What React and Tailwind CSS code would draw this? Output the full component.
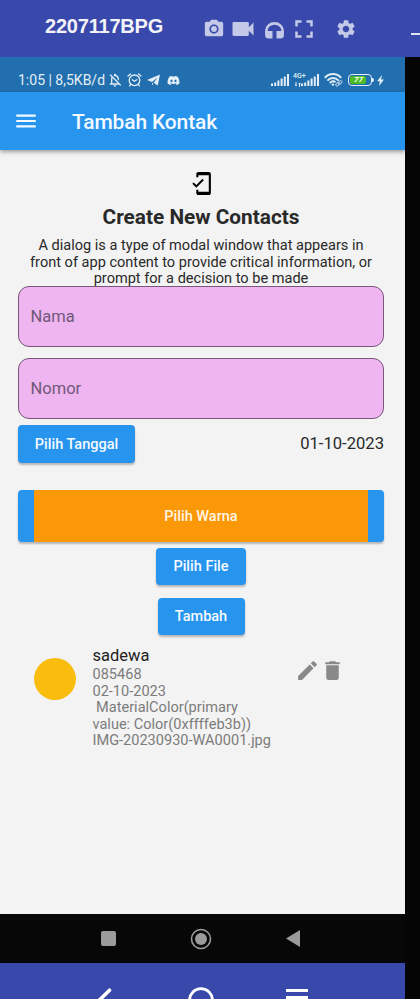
import React from "react";
import {
  MdPhotoCamera, MdVideocam, MdFullscreen, MdSettings, MdMenu,
  MdMobileFriendly, MdEdit, MdDelete, MdOutlineNotificationsOff,
} from "react-icons/md";
import { FaDiscord } from "react-icons/fa";

function Headphones() {
  return (
    <svg viewBox="0 0 19 17" className="mt-[2px] ml-[8px] h-[17px] w-[19px] shrink-0" fill="none">
      <path d="M1.400 11V8.500a8.100 7.100 0 0 1 16.200 0V11" stroke="currentColor" strokeWidth="2.600" />
      <path d="M.1 9h7.400v7.500H3.600A3.500 3.500 0 0 1 .1 13ZM11.500 9h7.400v4a3.500 3.500 0 0 1-3.500 3.500h-3.900Z" fill="currentColor" />
    </svg>
  );
}

function Alarm() {
  return (
    <svg viewBox="0 0 15 14" className="h-[14px] w-[15px] shrink-0" fill="none" stroke="currentColor" strokeWidth="1.3" strokeLinecap="round">
      <circle cx="7.500" cy="7.300" r="5.300" />
      <path d="M1 3 3.500 1M14 3l-2.500-2M5.300 6.700l2.100 1.600 2.400-1.600M3.600 11.600l-1 1.300M11.400 11.600l1 1.300" />
    </svg>
  );
}

function Signal() {
  return (
    <svg viewBox="0 0 18 12" className="h-3 w-[18px] shrink-0" fill="currentColor">
      <path d="M0 9.500h2V12H0zM3.200 8.500h2V12h-2zM6.400 6.500h2V12h-2zM9.600 4.500h2V12h-2zM12.800 2.500h2V12h-2zM16 0h2v12h-2z" />
    </svg>
  );
}

function Wifi() {
  return (
    <svg viewBox="0 0 19 14" className="h-[14px] w-[19px] shrink-0" fill="none" stroke="currentColor" strokeWidth="1.900">
      <path d="M.8 4.800c4.600-5 11.800-5 16.400 0M3.400 7.600c3.200-3.400 8-3.400 11.200 0M5.800 10c1.800-1.800 4.200-2 5.600-.8" />
      <circle cx="8.900" cy="11.600" r="1.200" fill="currentColor" stroke="none" />
      <g strokeWidth="1" opacity=".75">
        <rect x="11.600" y="10" width="4" height="2.500" rx="1.200" transform="rotate(-45 13.600 11.200)" />
        <rect x="14" y="8.200" width="4" height="2.500" rx="1.200" transform="rotate(-45 16 9.400)" />
      </g>
    </svg>
  );
}

function TopBar() {
  return (
    <header className="flex h-[57px] w-[420px] shrink-0 bg-[#3949ab] text-[#c3c9e6]">
      <div className="ml-[45px] mt-[14px] h-6 w-[159px] shrink-0 whitespace-nowrap font-['Liberation_Sans',sans-serif] text-[20px] leading-6 font-bold tracking-[-0.2px] text-[#f3f3f8]">
        2207117BPG
      </div>
      <div className="mt-[19px] flex h-5 shrink-0 items-center">
        <MdPhotoCamera className="-ml-px size-[22px] shrink-0" />
        <MdVideocam className="ml-[4px] size-7 shrink-0" />
        <Headphones />
        <MdFullscreen className="ml-[5px] size-[30px] shrink-0" />
        <MdSettings className="ml-[16px] size-[22px] shrink-0" />
        <div className="mt-[10px] ml-[54px] h-[2px] w-[10px] shrink-0 bg-[#dfe2f1]" />
      </div>
    </header>
  );
}

function StatusBar() {
  return (
    <div className="flex h-[35px] items-center bg-[#216fae] pt-[11px] text-[#e3eef6]">
      <span className="ml-[18px] w-[90px] whitespace-nowrap text-[14px] leading-4">1:05 | 8,5KB/d</span>
      <MdOutlineNotificationsOff className="-ml-px size-4 shrink-0" />
      <div className="ml-1 flex"><Alarm /></div>
      <svg viewBox="0 0 13 12" className="ml-[5px] h-3 w-[13px] shrink-0" fill="currentColor">
        <path d="M0 6 13 .5 10.700 11.500 6.800 8.800 10.500 3.500 5 8Zm5 2.700 1.500 1-1.400 1.500Z" />
      </svg>
      <FaDiscord className="ml-[7px] h-[11px] w-[13px] shrink-0" />
      <div className="ml-[91px] flex items-center">
        <Signal />
        <div className="ml-1 flex h-[14px] w-[13px] flex-col text-[7px] leading-[7px] font-medium">
          <span className="whitespace-nowrap">4G+</span>
          <svg viewBox="0 0 6 5" className="mt-0.5 ml-0.5 h-[5px] w-[6px]" stroke="currentColor" fill="none"><path d="M1 0v4M4.500 1v4M0 3.200h2M3.500 1.500h2" /></svg>
        </div>
        <div className="-ml-[5px] flex"><Signal /></div>
        <div className="ml-[5px] flex"><Wifi /></div>
        <div className="ml-[5px] flex h-3 w-6 items-center rounded-[4px] border border-[#e3eef6] p-[1px]">
          <div className="h-2 w-4 rounded-[2px] bg-[#4ebc24] pl-px text-center text-[8px] leading-[8px] font-bold italic text-white">77</div>
        </div>
        <div className="h-1 w-[2px] rounded-r bg-[#e3eef6]" />
        <svg viewBox="0 0 7 11" className="ml-[3px] h-[11px] w-[7px]" fill="currentColor"><path d="M5 0 0 6.200h2.800L2 11l5-6.500H4Z" /></svg>
      </div>
    </div>
  );
}

function Field({ label }) {
  return (
    <div className="flex h-[61px] items-center rounded-[11px] border border-[#79567a] bg-[#eeb5f0] pl-[11.500px] text-[16.500px] leading-5 text-[#72587a]">
      {label}
    </div>
  );
}

function Button({ className, children }) {
  return (
    <button className={`flex shrink-0 items-center justify-center rounded-[4px] bg-[#2794ee] pt-px text-[14.500px] leading-4 font-medium whitespace-nowrap text-[#f5faff] shadow-[0_2px_2px_rgba(0,0,0,0.25)] ${className}`}>
      {children}
    </button>
  );
}

function Contact() {
  return (
    <div className="mt-[11px] flex h-[106px] shrink-0">
      <div className="mt-[12px] ml-4 size-[42px] shrink-0 rounded-full bg-[#fbbd0d]" />
      <div className="ml-[16.500px] w-[205px] shrink-0 whitespace-pre text-[14.550px] leading-[16.600px] text-[#7c7c7c]">
        <div className="h-[21px] text-[16.500px] leading-5 text-[#222]">sadewa</div>
        <div>085468</div>
        <div>02-10-2023</div>
        <div>{" MaterialColor(primary"}</div>
        <div>value: Color(0xffffeb3b))</div>
        <div>IMG-20230930-WA0001.jpg</div>
      </div>
      <MdEdit className="mt-[12px] -ml-[3px] size-[25px] shrink-0 text-[#898989]" />
      <MdDelete className="mt-[12px] size-[25px] shrink-0 text-[#898989]" />
    </div>
  );
}

export default function App() {
  return (
    <div className="flex h-[999px] w-[420px] flex-col overflow-hidden bg-[#050505] font-[Roboto,sans-serif]">
      <TopBar />
      <div className="flex h-[942px] w-[405px] flex-col">
        <StatusBar />
        <div className="z-10 flex h-[58px] shrink-0 items-center bg-[#2794ee] text-[#f4faff] shadow-[0_2px_4px_rgba(0,0,0,0.35)]">
          <MdMenu className="ml-[13px] size-[26px]" />
          <h1 className="ml-[33px] pt-0.5 text-[21px] leading-6 font-medium tracking-[-0.15px]">Tambah Kontak</h1>
        </div>
        <main className="flex h-[764px] shrink-0 flex-col bg-[#f3f3f3] pr-[21px] pl-[18px] text-[#292929]">
          <MdMobileFriendly className="mt-[21px] size-[25px] shrink-0 self-center text-black" />
          <h2 className="mt-[9px] text-center text-[20.800px] leading-6 font-bold">Create New Contacts</h2>
          <p className="mt-[9px] h-[50px] shrink-0 text-center text-[14.550px] leading-[16.700px] whitespace-pre">
            {"A dialog is a type of modal window that appears in\nfront of app content to provide critical information, or\nprompt for a decision to be made"}
          </p>
          <div className="-mt-[2px] flex shrink-0 flex-col gap-[11px]">
            <Field label="Nama" />
            <Field label="Nomor" />
          </div>
          <div className="mt-[6px] flex shrink-0 items-center justify-between">
            <Button className="h-[38px] w-[117px]">Pilih Tanggal</Button>
            <span className="text-[16.600px] leading-5">01-10-2023</span>
          </div>
          <button className="mt-[27px] flex h-[52px] shrink-0 justify-center rounded-[4px] bg-[#2794ee] px-4 shadow-[0_2px_2px_rgba(0,0,0,0.25)]">
            <span className="flex h-full w-full items-center justify-center bg-[#fa9808] pt-px text-[14.500px] leading-4 font-medium text-[#fff5e5]">Pilih Warna</span>
          </button>
          <Button className="mt-[6px] h-[37px] w-[90px] self-center">Pilih File</Button>
          <Button className="mt-[13px] h-[37px] w-[87px] self-center">Tambah</Button>
          <Contact />
        </main>
        <nav className="flex h-[49px] shrink-0 items-center bg-[#070707] text-[#9b9b9b]">
          <div className="ml-[101px] size-[15px] rounded-[2px] bg-[#9b9b9b]" />
          <svg viewBox="0 0 22 22" className="ml-[74px] size-[22px]" fill="none" stroke="currentColor">
            <circle cx="11" cy="11" r="9.500" strokeWidth="1.600" />
            <circle cx="11" cy="11" r="6" fill="currentColor" stroke="none" />
          </svg>
          <svg viewBox="0 0 14 17" className="ml-[74px] h-[17px] w-[14px]" fill="currentColor"><path d="M0 8.500 14 0v17Z" /></svg>
        </nav>
        <footer className="flex h-[36px] shrink-0 overflow-hidden bg-[#3949ab] text-white">
          <svg viewBox="0 0 16 24" className="mt-[24px] ml-[96px] h-6 w-4 shrink-0" fill="none" stroke="currentColor" strokeWidth="3.600" strokeLinecap="round"><path d="M13.500 3.200 2.500 14l11 10" /></svg>
          <svg viewBox="0 0 26 26" className="mt-6 ml-[76px] size-[26px] shrink-0" fill="none" stroke="currentColor" strokeWidth="2.800"><circle cx="13" cy="13" r="11.400" /></svg>
          <div className="mt-[26px] ml-[72px] flex shrink-0 flex-col gap-[4px]">
            <div className="h-1 w-[22px] bg-white" />
            <div className="h-1 w-[22px] bg-white" />
          </div>
        </footer>
      </div>
    </div>
  );
}
